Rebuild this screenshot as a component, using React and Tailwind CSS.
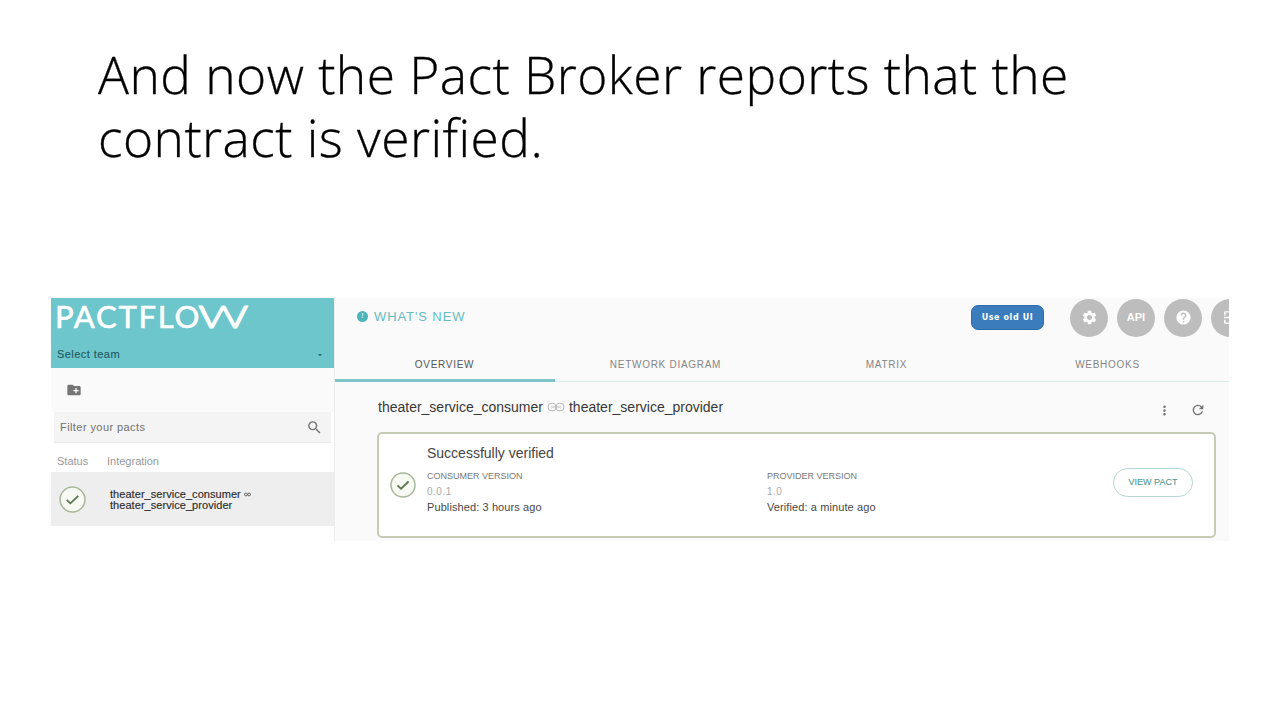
import React from "react";
import { MdSettings, MdHelp, MdMoreVert, MdRefresh, MdSearch, MdCreateNewFolder, MdArrowDropDown, MdExitToApp } from "react-icons/md";

function StatusCheck({ className }) {
  return (
    <svg viewBox="0 0 26 26" className={className}>
      <circle cx="13" cy="13" r="12" fill="#f6faf2" stroke="#a9b89c" strokeWidth="1.5" />
      <path d="M7.4 13.4l3.6 3.3 7.6-7.2" fill="none" stroke="#5d7650" strokeWidth="1.8" />
    </svg>
  );
}

function Logo() {
  return (
    <div className="flex h-[37px] items-center pl-[4px] font-['Lato'] text-[31px] font-normal leading-none text-white [-webkit-text-stroke:0.6px_white]">
      <span className="tracking-[1.75px]">PACTFLO</span>
      <span className="-ml-[3px] inline-block origin-left scale-x-[1.6] font-light [-webkit-text-stroke:1.1px_white]">W</span>
    </div>
  );
}

function Sidebar() {
  return (
    <aside className="flex w-[283px] flex-col bg-white">
      <div className="flex h-[70px] flex-col bg-[#6dc6cc]">
        <Logo />
        <div className="flex h-[33px] items-center justify-between pl-[6px] pr-[9px] pt-[6px] text-[11px] text-[#245a60]">
          <span className="tracking-[0.45px] [-webkit-text-stroke:0.15px]">Select team</span>
          <MdArrowDropDown className="size-[10px]" />
        </div>
      </div>
      <div className="flex h-[44px] items-center bg-[#fafafa] pl-[15px]">
        <MdCreateNewFolder className="size-[16px] text-[#757575]" />
      </div>
      <div className="mx-[3px] flex h-[31px] items-center justify-between border-b border-[#e9e9e9] bg-[#f4f4f4] pl-[6px] pr-[8px]">
        <span className="text-[11px] tracking-[0.42px] text-[#707070]">Filter your pacts</span>
        <MdSearch className="size-[17px] text-[#757575]" />
      </div>
      <div className="flex h-[29px] items-center pl-[6px] pt-[8px] text-[11px] text-[#999]">
        <span className="w-[50px]">Status</span>
        <span>Integration</span>
      </div>
      <div className="flex h-[54px] items-center bg-[#eeeeee] pl-[8px] pt-px">
        <StatusCheck className="size-[27px]" />
        <p className="ml-[24px] text-[11px] leading-[11px] text-[#2c2c2c] [-webkit-text-stroke:0.15px]">
          <span className="tracking-[0.05px]">theater_service_consumer</span>
          <svg viewBox="0 0 8 5" className="ml-[3px] inline h-[5px] w-[7px] align-[1px]" fill="none" stroke="#555" strokeWidth="1">
            <circle cx="2.2" cy="2.5" r="1.6" />
            <circle cx="5.8" cy="2.5" r="1.6" />
          </svg>
          <br />
          <span className="tracking-[0.05px]">theater_service_provider</span>
        </p>
      </div>
    </aside>
  );
}

function RoundButton({ children }) {
  return (
    <div className="flex size-[38px] shrink-0 items-center justify-center rounded-full bg-[#bdbdbd] text-[11px] font-bold text-white">
      {children}
    </div>
  );
}

function TopBar() {
  return (
    <header className="flex h-[39px] items-center pl-[22px]">
      <div className="-mt-[2px] flex items-center gap-[6px] text-[#65bcc2]">
        <span className="flex size-[11px] items-center justify-center rounded-full bg-[#4fb3ba] text-[7px] font-bold text-[#d5f0f2]">!</span>
        <span className="text-[13px] tracking-[0.9px]">WHAT'S NEW</span>
      </div>
      <button className="ml-auto h-[25px] w-[73px] rounded-[7px] border border-[#2f6ca9] bg-[#3b7cbd] font-['DejaVu_Sans'] text-[8px] font-bold tracking-[0.6px] text-white">
        Use old UI
      </button>
      <div className="ml-[26px] flex w-[159px] gap-[9px] overflow-hidden">
        <RoundButton><MdSettings className="size-[17px]" /></RoundButton>
        <RoundButton>API</RoundButton>
        <RoundButton><MdHelp className="size-[17px]" /></RoundButton>
        <RoundButton><MdExitToApp className="size-[17px]" /></RoundButton>
      </div>
    </header>
  );
}

function Tabs() {
  const tabs = ["OVERVIEW", "NETWORK DIAGRAM", "MATRIX", "WEBHOOKS"];
  return (
    <nav className="-ml-px flex h-[45px] border-b border-[#dcebea] pt-[11px] text-[10px] tracking-[0.72px]">
      {tabs.map((t, i) => (
        <div
          key={t}
          className={
            i === 0
              ? "-mb-px flex w-[221px] shrink-0 items-center justify-center border-b-[3px] border-[#7cc4c6] pt-[2px] text-[#555]"
              : "flex w-[221px] shrink-0 items-center justify-center text-[#858585]"
          }
        >
          {t}
        </div>
      ))}
    </nav>
  );
}

function Version({ title, version, note }) {
  return (
    <div className="text-[#484848]">
      <div className="text-[9px] leading-[16px] text-[#777]">{title}</div>
      <div className="text-[10px] leading-[16px] tracking-[0.5px] text-[#aaa]">{version}</div>
      <div className="text-[11px] leading-[15px] tracking-[0.1px]">{note}</div>
    </div>
  );
}

function ResultCard() {
  return (
    <section className="ml-[42px] flex h-[106px] w-[839px] rounded-[5px] border-2 border-[#c6cbb5] bg-white">
      <div className="flex w-[48px] items-center pl-[11px]">
        <StatusCheck className="size-[26px]" />
      </div>
      <div className="flex w-[340px] flex-col pt-[9px]">
        <div className="text-[14px] leading-[20px] text-[#444]">Successfully verified</div>
        <div className="mt-[5px]">
          <Version title="CONSUMER VERSION" version="0.0.1" note="Published: 3 hours ago" />
        </div>
      </div>
      <div className="w-[346px] pt-[34px]">
        <Version title="PROVIDER VERSION" version="1.0" note="Verified: a minute ago" />
      </div>
      <button className="mt-[34px] h-[29px] w-[80px] rounded-full border border-[#b5d6d3] text-[9px] text-[#4f9791] [-webkit-text-stroke:0.1px]">
        VIEW PACT
      </button>
    </section>
  );
}

function Overview() {
  return (
    <main className="flex flex-1 flex-col overflow-hidden border-l border-[#eee] bg-[#fafafa]">
      <TopBar />
      <Tabs />
      <div className="flex h-[50px] items-center pl-[43px] pr-[23px] text-[14px] text-[#383838]">
        <span>theater_service_consumer</span>
        <svg viewBox="0 0 18 10" className="mx-[4px] h-[10px] w-[18px]" fill="none" stroke="#bbb" strokeWidth="1">
          <circle cx="5" cy="5" r="4" />
          <circle cx="13" cy="5" r="4" />
          <path d="M4 5h10" />
        </svg>
        <span>theater_service_provider</span>
        <MdMoreVert className="ml-auto mr-[18px] mt-[6px] size-[15px] text-[#757575]" />
        <MdRefresh className="mt-[6px] size-[16px] text-[#757575]" />
      </div>
      <ResultCard />
    </main>
  );
}

export default function App() {
  return (
    <div className="h-[720px] w-[1280px] overflow-hidden bg-white font-['Liberation_Sans',sans-serif]">
      <h1 className="h-[298px] whitespace-nowrap pl-[98px] pt-[43px] font-['Open_Sans',sans-serif] text-[51.5px] font-light leading-[62.5px] tracking-[0.45px] text-black [-webkit-text-stroke:0.3px]">
        And now the Pact Broker reports that the<br />contract is verified.
      </h1>
      <div className="ml-[51px] flex h-[243px] w-[1178px]">
        <Sidebar />
        <Overview />
      </div>
    </div>
  );
}
